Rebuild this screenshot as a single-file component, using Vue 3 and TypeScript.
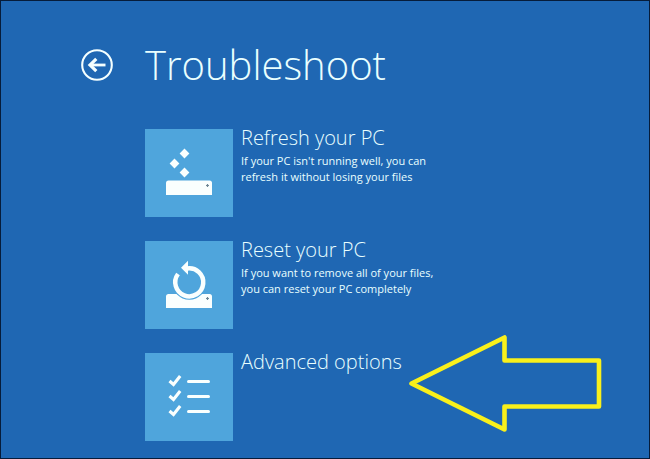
<script setup lang="ts">
interface Option {
  id: 'refresh' | 'reset' | 'advanced'
  title: string
  lines: string[]
}

const options: Option[] = [
  {
    id: 'refresh',
    title: 'Refresh your PC',
    lines: ["If your PC isn't running well, you can", 'refresh it without losing your files'],
  },
  {
    id: 'reset',
    title: 'Reset your PC',
    lines: ['If you want to remove all of your files,', 'you can reset your PC completely'],
  },
  { id: 'advanced', title: 'Advanced options', lines: [] },
]

const checkRows: number[] = [28, 43, 58]
</script>

<template>
  <main class="screen">
    <header class="header">
      <button class="back" type="button" aria-label="Back">
        <svg width="32" height="32" viewBox="0 0 32 32" fill="none" stroke="currentColor">
          <circle cx="16" cy="16" r="14.8" stroke-width="2.1" />
          <path d="M24.5 16H9" stroke-width="2.8" />
          <path d="M15.3 9.8L9 16l6.3 6.2" stroke-width="3.2" />
        </svg>
      </button>
      <h1 class="title">Troubleshoot</h1>
    </header>

    <nav class="options">
      <button v-for="option in options" :key="option.id" class="option" type="button">
        <span class="tile">
          <svg v-if="option.id === 'refresh'" width="88" height="88" viewBox="0 0 88 88" fill="currentColor">
            <path d="M39.5 19.6l4.9 4.9-4.9 4.9-4.9-4.9zM29.5 29.6l4.9 4.9-4.9 4.9-4.9-4.9zM39.5 38.6l4.9 4.9-4.9 4.9-4.9-4.9z" />
            <path d="M21 66V54q0-2.500 2.500-2.500h41q2.500 0 2.500 2.500v12z" />
            <path class="light" d="M61 56.500h3M62.500 55v3" stroke-width="1.200" />
          </svg>
          <svg v-else-if="option.id === 'reset'" width="88" height="88" viewBox="0 0 88 88" fill="currentColor">
            <path d="M21 67V55.500q0-2.500 2.500-2.500h41q2.500 0 2.500 2.500V67z" />
            <circle class="cutout" cx="44.300" cy="41.300" r="17.400" />
            <path d="M42 27.500A14 14 0 1 1 33 33" fill="none" stroke="currentColor" stroke-width="4.500" />
            <path d="M36 26.800l7-7v14z" />
            <path class="light" d="M61 57.500h3M62.500 56v3" stroke-width="1.200" />
          </svg>
          <svg v-else width="88" height="88" viewBox="0 0 88 88" fill="none" stroke="currentColor">
            <g v-for="y in checkRows" :key="y">
              <path :d="`M24.500 ${y}l4 3.500 6.700-8.500`" stroke-width="3.100" />
              <path :d="`M43.500 ${y + 0.5}h20`" stroke-width="3" stroke-linecap="round" />
            </g>
          </svg>
        </span>
        <span class="text">
          <span class="name">{{ option.title }}</span>
          <span v-for="line in option.lines" :key="line" class="line">{{ line }}</span>
        </span>
      </button>
    </nav>

    <svg class="pointer" width="200" height="104" viewBox="0 0 200 104" aria-hidden="true">
      <path d="M7.500 52.500L100.500 6.500v23h94.500v46h-94.500v23z" stroke-width="4.600" stroke-linejoin="round" />
    </svg>
  </main>
</template>

<style>
body {
  margin: 0;
  background: #1f67b3;
}
</style>

<style scoped>
.screen {
  position: relative;
  box-sizing: border-box;
  min-height: 100vh;
  padding: 32px 24px 17px 80px;
  border: 1px solid #061c3a;
  background: #1f67b3;
  color: #fff;
  font-family: "Open Sans", "Noto Sans", sans-serif;
}

.header {
  display: flex;
  align-items: center;
  gap: 32px;
  height: 64px;
}

.back {
  display: flex;
  padding: 0;
  border: 0;
  background: none;
  color: #f4ffff;
}

.title {
  margin: 0;
  color: #e9ffff;
  font-size: 40px;
  font-weight: 300;
  line-height: 64px;
}

.options {
  display: flex;
  flex-direction: column;
  gap: 24px;
  margin: 32px 0 0 64px;
}

.option {
  display: flex;
  gap: 8px;
  padding: 0;
  border: 0;
  background: none;
  color: #e9ffff;
  font: inherit;
  text-align: left;
}

.tile {
  flex: none;
  width: 88px;
  height: 88px;
  background: #4fa5dc;
  color: #fafffe;
}

.tile svg {
  display: block;
}

.cutout {
  fill: #4fa5dc;
}

.light {
  stroke: #6f8795;
}

.text {
  display: flex;
  flex-direction: column;
}

.name {
  margin-bottom: 6px;
  font-size: 20px;
  font-weight: 300;
  line-height: 18px;
}

.line {
  font-size: 11px;
  line-height: 16px;
}

.pointer {
  position: absolute;
  top: 330px;
  left: 403px;
  fill: none;
  stroke: #f9f01b;
}
</style>
